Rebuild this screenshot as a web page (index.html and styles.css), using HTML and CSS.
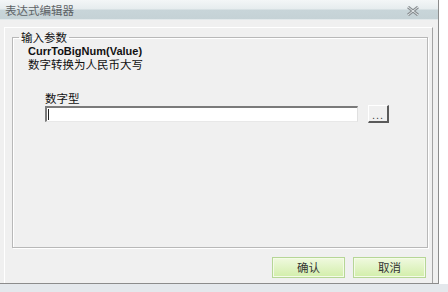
FILE: index.html
```html
<!DOCTYPE html>
<html lang="zh-CN">
<head>
    <meta charset="UTF-8">
    <title>表达式编辑器</title>
    <link rel="stylesheet" href="styles.css">
</head>
<body>
    <div class="window">
        <div class="titlebar">
            <span class="title">表达式编辑器</span>
            <svg class="close" width="14" height="10" viewBox="0 0 14 10">
                <path d="M2 1 L12 9 M12 1 L2 9" stroke="#8a8f92" stroke-width="3" fill="none"/>
                <path d="M2 1 L12 9 M12 1 L2 9" stroke="#e4e9eb" stroke-width="1" fill="none"/>
            </svg>
        </div>
        <div class="content">
            <div class="panel">
                <fieldset class="group">
                    <legend>输入参数</legend>
                    <div class="func-name">CurrToBigNum(Value)</div>
                    <div class="func-desc">数字转换为人民币大写</div>
                    <div class="param">
                        <div class="param-label">数字型</div>
                        <div class="param-row">
                            <div class="param-input"><span class="caret"></span></div>
                            <div class="dots-btn">...</div>
                        </div>
                    </div>
                </fieldset>
                <div class="footer">
                    <div class="btn">确认</div>
                    <div class="btn">取消</div>
                </div>
            </div>
        </div>
    </div>
</body>
</html>
```

FILE: styles.css
```css
html, body {
    margin: 0;
    padding: 0;
}

body {
    width: 448px;
    height: 292px;
    overflow: hidden;
    background: linear-gradient(to bottom, #ffffff 284px, #e4e8ec 284px);
    font-family: "Noto Sans CJK SC", "Liberation Sans", sans-serif;
    font-size: 11.5px;
    color: #111;
}

.window {
    width: 438px;
    height: 283px;
    border-right: 1px solid #8c8c8c;
    border-bottom: 1px solid #8c8c8c;
    background-color: #f0f0f0;
    display: flex;
    flex-direction: column;
}

.titlebar {
    height: 20px;
    flex-shrink: 0;
    display: flex;
    align-items: center;
    justify-content: space-between;
    padding: 0 18px 0 5px;
    background: linear-gradient(to bottom, #f3f6f7 0, #e6ecee 9px, #c8d5d9 10px, #c5d2d6 19px, #ffffff 20px);
}

.title {
    color: #5e6366;
    font-size: 11.5px;
    line-height: 14px;
}

.close {
    margin-top: 1px;
}

.content {
    flex: 1;
    display: flex;
    padding: 7px 5px 0 4px;
}

.panel {
    flex: 1;
    display: flex;
    flex-direction: column;
    border-top: 1px solid #ffffff;
    border-left: 1px solid #ffffff;
    border-right: 1px solid #a2a2a2;
}

.group {
    flex: 1;
    margin: 3px 4px 0 7px;
    padding: 0 0 0 6px;
    border: 1px solid #b8b8b8;
    box-shadow: inset 1px 1px 0 #ffffff, 1px 1px 0 #ffffff;
    min-width: 0;
}

.group legend {
    padding: 0 2px;
    line-height: 13px;
    color: #111;
}

.func-name {
    margin: 2px 0 0 9px;
    font-family: "Liberation Sans", sans-serif;
    font-weight: bold;
    font-size: 11px;
    line-height: 11px;
}

.func-desc {
    margin-left: 9px;
    line-height: 14px;
}

.param {
    margin: 20px 0 0 26px;
}

.param-label {
    line-height: 14px;
}

.param-row {
    display: flex;
    align-items: center;
    gap: 10px;
}

.param-input {
    width: 310px;
    height: 13px;
    background: #ffffff;
    border-top: 2px solid #7a7a7a;
    border-left: 2px solid #7a7a7a;
    border-right: 1px solid #e0e0e0;
    border-bottom: 1px solid #e8e8e8;
    position: relative;
}

.caret {
    position: absolute;
    left: 1px;
    top: 1px;
    width: 1px;
    height: 11px;
    background: #222;
}

.dots-btn {
    width: 18px;
    height: 15px;
    border-top: 1px solid #ffffff;
    border-left: 1px solid #ffffff;
    border-right: 2px solid #5a5a5a;
    border-bottom: 2px solid #5a5a5a;
    background: #f0f0f0;
    font-family: "Liberation Sans", sans-serif;
    font-size: 11px;
    line-height: 19px;
    text-align: center;
    color: #444;
    letter-spacing: 1px;
    overflow: hidden;
}

.footer {
    height: 35px;
    flex-shrink: 0;
    display: flex;
    justify-content: flex-end;
    gap: 8px;
    padding: 9px 6px 0 0;
    box-sizing: border-box;
}

.btn {
    width: 71px;
    height: 19px;
    border: 1px solid #b6d696;
    box-shadow: inset 0 0 0 1px #f4fbe8;
    background: linear-gradient(to bottom, #f0f9df, #d2eeaa);
    text-align: center;
    line-height: 19px;
    font-size: 11.5px;
    color: #333;
}
```
